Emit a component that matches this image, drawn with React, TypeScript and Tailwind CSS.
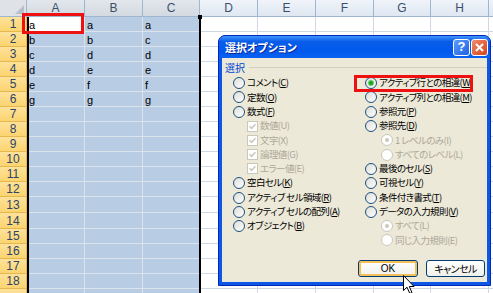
import clsx from 'clsx'

type Col = { key: string; width: string; sel?: boolean }

const cols: Col[] = [
  { key: 'A', width: 'w-[58px]', sel: true },
  { key: 'B', width: 'w-[58px]', sel: true },
  { key: 'C', width: 'w-[57px]', sel: true },
  { key: 'D', width: 'w-[58px]' },
  { key: 'E', width: 'w-[58px]' },
  { key: 'F', width: 'w-[58px]' },
  { key: 'G', width: 'w-[57px]' },
  { key: 'H', width: 'w-[58px]' },
  { key: '', width: 'w-[40px]' }
]

const data: string[][] = [
  ['a', 'a', 'a'],
  ['b', 'b', 'c'],
  ['c', 'd', 'd'],
  ['d', 'e', 'e'],
  ['e', 'f', 'f'],
  ['g', 'g', 'g']
]

const rowNums = Array.from({ length: 19 }, (_, i) => i + 1)

type Item = {
  label: string
  key: string
  kind: 'radio' | 'check'
  checked?: boolean
  disabled?: boolean
  indent?: boolean
}

const leftItems: Item[] = [
  { label: 'コメント', key: 'C', kind: 'radio' },
  { label: '定数', key: 'O', kind: 'radio' },
  { label: '数式', key: 'F', kind: 'radio' },
  { label: '数値', key: 'U', kind: 'check', checked: true, disabled: true, indent: true },
  { label: '文字', key: 'X', kind: 'check', checked: true, disabled: true, indent: true },
  { label: '論理値', key: 'G', kind: 'check', checked: true, disabled: true, indent: true },
  { label: 'エラー値', key: 'E', kind: 'check', checked: true, disabled: true, indent: true },
  { label: '空白セル', key: 'K', kind: 'radio' },
  { label: 'アクティブ セル領域', key: 'R', kind: 'radio' },
  { label: 'アクティブ セルの配列', key: 'A', kind: 'radio' },
  { label: 'オブジェクト', key: 'B', kind: 'radio' }
]

const rightItems: Item[] = [
  { label: 'アクティブ行との相違', key: 'W', kind: 'radio', checked: true },
  { label: 'アクティブ列との相違', key: 'M', kind: 'radio' },
  { label: '参照元', key: 'P', kind: 'radio' },
  { label: '参照先', key: 'D', kind: 'radio' },
  { label: '1 レベルのみ', key: 'I', kind: 'radio', checked: true, disabled: true, indent: true },
  { label: 'すべてのレベル', key: 'L', kind: 'radio', disabled: true, indent: true },
  { label: '最後のセル', key: 'S', kind: 'radio' },
  { label: '可視セル', key: 'Y', kind: 'radio' },
  { label: '条件付き書式', key: 'T', kind: 'radio' },
  { label: 'データの入力規則', key: 'V', kind: 'radio' },
  { label: 'すべて', key: 'L', kind: 'radio', checked: true, disabled: true, indent: true },
  { label: '同じ入力規則', key: 'E', kind: 'radio', disabled: true, indent: true }
]

const Radio = ({ checked, disabled }: { checked?: boolean; disabled?: boolean }) => (
  <span
    className={clsx(
      'flex h-[12px] w-[12px] shrink-0 items-center justify-center rounded-full border',
      disabled
        ? 'border-[#cac8bb] bg-white'
        : 'border-[#1c5180] bg-[linear-gradient(135deg,#dcdcd7,#ffffff)]'
    )}
  >
    {checked && (
      <span
        className={clsx(
          'h-[4px] w-[4px] rounded-full',
          disabled ? 'bg-[#cac8bb]' : 'bg-[#21a121] shadow-[0_0_0_1px_#5fcf5f]'
        )}
      />
    )}
  </span>
)

const Check = () => (
  <span className="flex h-[11px] w-[11px] shrink-0 items-center justify-center border border-[#cac8bb] bg-white">
    <svg width="7" height="7" viewBox="0 0 7 7">
      <path d="M0.5 3.2 L2.6 5.4 L6.5 1.2" fill="none" stroke="#cac8bb" strokeWidth="1.6" />
    </svg>
  </span>
)

const Option = ({ item, indent }: { item: Item; indent: string }) => (
  <div className={clsx('flex h-[14.3px] items-center', item.indent && indent)}>
    {item.kind === 'radio' ? <Radio checked={item.checked} disabled={item.disabled} /> : <Check />}
    <span
      className={clsx(
        'ml-[2px] whitespace-nowrap leading-none',
        item.disabled ? 'text-[#aca899]' : 'text-black'
      )}
    >
      {item.label}(<span className={clsx(!item.disabled && 'underline underline-offset-1')}>{item.key}</span>)
    </span>
  </div>
)

const Sheet = () => (
  <div className="flex flex-col font-['Liberation_Sans',sans-serif] text-[11px]">
    <div className="flex h-[17px]">
      <div className="relative w-[27px] shrink-0 border-r border-b border-[#9eb6ce] bg-[#dfe3e8]">
        <span className="absolute right-[2px] bottom-[2px] h-0 w-0 border-l-[9px] border-t-[9px] border-l-transparent border-t-transparent border-r-[0px] border-b-[0px] [border-bottom:9px_solid_#b6c0cc]" />
      </div>
      {cols.map((c, i) => (
        <div
          key={i}
          className={clsx(
            'flex shrink-0 items-center justify-center border-r border-b border-[#9eb6ce] text-[12px] text-[#3b4f6c]',
            c.width,
            c.sel
              ? 'bg-[linear-gradient(#e3e7ec,#d3d9e1)]'
              : 'bg-[linear-gradient(#f0f4fa,#dfe7f2)]'
          )}
        >
          {c.key}
        </div>
      ))}
    </div>
    {rowNums.map((r) => (
      <div key={r} className={clsx('flex', r === 13 || r === 14 ? 'h-[16px]' : 'h-[15px]')}>
        <div className="flex w-[27px] shrink-0 items-center justify-center border-r border-b border-[#e5b84f] bg-[linear-gradient(#fee29a,#fbd470)] text-[12px] text-[#2c4568]">
          {r < 19 ? r : ''}
        </div>
        {cols.map((c, ci) => {
          const active = r === 1 && ci === 0
          return (
            <div
              key={ci}
              className={clsx(
                'flex shrink-0 items-center border-r border-b pl-[2px] pt-[2px] text-black',
                c.width,
                active
                  ? 'border-[#dbe2ec] bg-white'
                  : c.sel
                    ? 'border-[#dbe2ec] bg-[#b8cce4]'
                    : 'border-[#d0d7e5] bg-white'
              )}
            >
              {data[r - 1]?.[ci] ?? ''}
            </div>
          )
        })}
      </div>
    ))}
  </div>
)

const Dialog = () => (
  <div className="absolute left-[218px] top-[35px] flex h-[251px] w-[273px] flex-col rounded-t-[7px] border border-[#0027b8] bg-[#0d57e6] font-['Noto_Sans_CJK_JP',sans-serif] text-[9.5px] tracking-[-0.6px] [font-feature-settings:'palt']">
    <div className="flex h-[22px] items-center rounded-t-[6px] bg-[linear-gradient(#3e95ff,#0a5de9_25%,#0058ee_70%,#0b63f4)] pl-[6px] pr-[2px]">
      <span className="text-[11px] font-bold tracking-normal text-white [text-shadow:1px_1px_0_#0a2a9a]">
        選択オプション
      </span>
      <div className="ml-auto flex gap-[1px]">
        <div className="flex h-[17px] w-[17px] items-center justify-center rounded-[3px] border border-white bg-[linear-gradient(135deg,#5c9cfa,#1f61e4)] font-['Liberation_Sans',sans-serif] text-[13px] font-bold tracking-normal text-white">
          ?
        </div>
        <div className="flex h-[17px] w-[17px] items-center justify-center rounded-[3px] border border-white bg-[linear-gradient(135deg,#f08a6c,#d5431c)]">
          <svg width="9" height="9" viewBox="0 0 9 9">
            <path d="M1 1 L8 8 M8 1 L1 8" stroke="white" strokeWidth="2" />
          </svg>
        </div>
      </div>
    </div>
    <div className="mx-[3px] mb-[3px] flex flex-1 flex-col bg-[#ece9d8]">
      <div className="mt-[2px] flex h-[14px] items-center pl-[3px]">
        <span className="text-[10px] tracking-normal text-[#0046d5]">選択</span>
        <span className="ml-[4px] flex-1 border-t border-[#d0d0bf]" />
      </div>
      <div className="mt-[2px] flex pl-[11px]">
        <div className="flex w-[132px] flex-col">
          {leftItems.map((it) => (
            <Option key={it.label} item={it} indent="pl-[14px]" />
          ))}
        </div>
        <div className="flex flex-col">
          {rightItems.map((it) => (
            <Option key={it.label} item={it} indent="pl-[16px]" />
          ))}
        </div>
      </div>
      <div className="mt-[12px] flex justify-end gap-[8px] pr-[2px] tracking-normal">
        <div className="flex h-[17px] w-[60px] items-center justify-center rounded-[3px] border border-[#003c74] bg-[linear-gradient(#fff,#f0f0ea)] shadow-[inset_0_0_0_2px_#f5c05a] font-['Liberation_Sans',sans-serif] text-[10px] text-black">
          OK
        </div>
        <div className="flex h-[17px] w-[59px] items-center justify-center rounded-[3px] border border-[#003c74] bg-[linear-gradient(#fff,#f0f0ea)] text-[10px] tracking-[-0.6px] text-black">
          キャンセル
        </div>
      </div>
    </div>
  </div>
)

export default function App() {
  return (
    <div className="relative h-[293px] w-[493px] overflow-hidden bg-white">
      <Sheet />
      {/* column selection edges */}
      <div className="absolute left-[27px] top-[17px] h-[276px] w-[2px] bg-black" />
      <div className="absolute left-[199px] top-[17px] h-[276px] w-[2px] bg-black" />
      <div className="absolute left-[198px] top-[15px] h-[4px] w-[4px] bg-black" />
      {/* annotation on A1 */}
      <div className="absolute left-[22px] top-[13px] h-[21px] w-[62px] border-[3px] border-[#ee1111]" />
      <Dialog />
      {/* annotation on option */}
      <div className="absolute left-[354px] top-[75px] h-[17px] w-[119px] border-[3px] border-[#ee1111]" />
      <svg className="absolute left-[403px] top-[275px]" width="13" height="20" viewBox="0 0 13 20">
        <path d="M0.5 0.5 L0.5 15.5 L4 12.2 L6.8 18.5 L9 17.6 L6.3 11.5 L11 11.5 Z" fill="white" stroke="black" strokeWidth="1" />
      </svg>
    </div>
  )
}
